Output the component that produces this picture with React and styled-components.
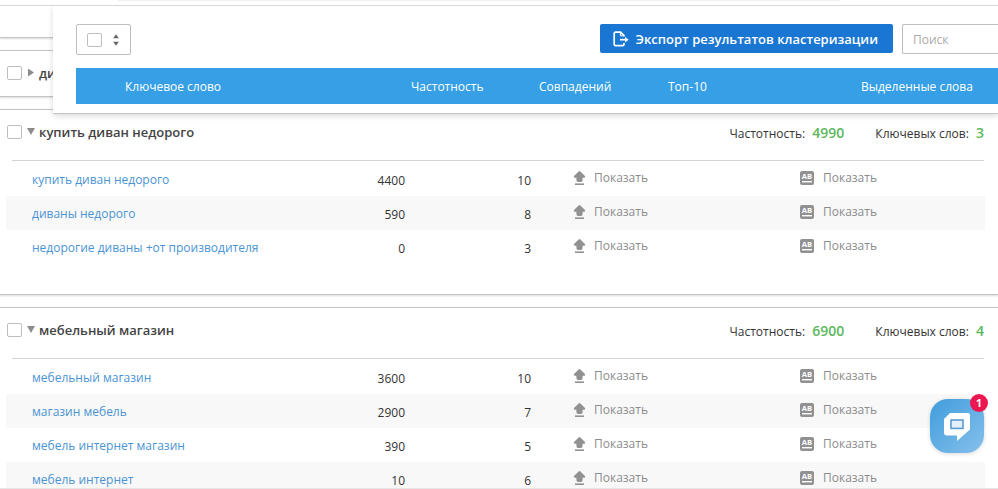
import React from 'react'
import styled, { createGlobalStyle } from 'styled-components'

const clusters = [
  {
    title: 'купить диван недорого',
    frequency: 4990,
    rows: [
      { keyword: 'купить диван недорого', frequency: 4400, matches: 10 },
      { keyword: 'диваны недорого', frequency: 590, matches: 8 },
      { keyword: 'недорогие диваны +от производителя', frequency: 0, matches: 3 },
    ],
  },
  {
    title: 'мебельный магазин',
    frequency: 6900,
    rows: [
      { keyword: 'мебельный магазин', frequency: 3600, matches: 10 },
      { keyword: 'магазин мебель', frequency: 2900, matches: 7 },
      { keyword: 'мебель интернет магазин', frequency: 390, matches: 5 },
      { keyword: 'мебель интернет', frequency: 10, matches: 6 },
    ],
  },
]

const ExportIcon = () => (
  <svg width="16" height="16" viewBox="0 0 16 16" fill="none" stroke="#fff" strokeWidth="1.7">
    <path d="M11 5.4V4.6L7.6 1.2H2.6Q1.2 1.2 1.2 2.6V13.2Q1.2 14.6 2.6 14.6H9.6Q11 14.6 11 13.2V12" />
    <path d="M7.4 1.2V4.8H11" strokeWidth="1" />
    <path d="M7 8.7H13" />
    <path d="M12 5.8L15.6 8.7L12 11.6Z" fill="#fff" stroke="none" />
  </svg>
)

const UploadIcon = () => (
  <svg width="13" height="16" viewBox="0 -1 13 16" fill="#919191">
    <path d="M6.5 0Q7 0 7.4 0.4L12 4.9Q12.6 6.5 11.4 6.7H9.6V9Q9.6 10.6 8.2 11H4.8Q3.4 10.6 3.4 9V6.7H1.6Q0.4 6.5 1 4.9L5.6 0.4Q6 0 6.5 0Z" />
    <rect x="2" y="12.4" width="9" height="1.6" />
  </svg>
)

const WordsIcon = () => (
  <svg width="14" height="14" viewBox="0 0 14 14">
    <rect width="14" height="14" rx="2" fill="#919191" />
    <text x="7" y="8.2" textAnchor="middle" fontSize="7.6" fontWeight="700" fill="#fff">AB</text>
    <rect x="2" y="10" width="10" height="1.4" fill="#fff" />
  </svg>
)

const ChatIcon = () => (
  <svg width="28" height="30" viewBox="0 0 28 30">
    <path d="M7 1H24.6Q27 1 27 3.4V17.5L14 29V23.5H3.4Q1 23.5 1 21.1V7Z" fill="#fff" />
    <rect x="8" y="8" width="12" height="8.4" fill="#e3f0fa" stroke="#5a9bd4" strokeWidth="1.6" />
  </svg>
)

const SortIcon = () => (
  <svg width="6" height="12" viewBox="0 0 6 12" fill="#666">
    <path d="M0.2 4.2L3 0.2L5.8 4.2Z" />
    <path d="M0.2 7.8L3 11.8L5.8 7.8Z" />
  </svg>
)

const Cluster = ({ title, frequency, rows }) => (
  <Panel>
    <Head>
      <Checkbox aria-label={title} />
      <Toggle $open aria-label="Свернуть" />
      <Title>{title}</Title>
      <Stats>
        <span>Частотность: <Value>{frequency}</Value></span>
        <span>Ключевых слов: <Value>{rows.length}</Value></span>
      </Stats>
    </Head>
    <Divider />
    <Table>
      <colgroup>
        <col />
        <Col $width={100} />
        <Col $width={168} />
        <Col $width={227} />
        <Col $width={185} />
      </colgroup>
      <tbody>
        {rows.map((row) => (
          <Row key={row.keyword}>
            <KeywordCell><Keyword href="#">{row.keyword}</Keyword></KeywordCell>
            <NumberCell>{row.frequency}</NumberCell>
            <NumberCell $gap={42}>{row.matches}</NumberCell>
            <Cell><Show><UploadIcon />Показать</Show></Cell>
            <Cell><Show $wide><WordsIcon />Показать</Show></Cell>
          </Row>
        ))}
      </tbody>
    </Table>
  </Panel>
)

const App = () => {
  return (
    <Page>
      <GlobalStyle />
      <TopBar><TopShade /></TopBar>
      <Blank />
      <Panel $collapsed>
        <Head>
          <Checkbox aria-label="диваны" />
          <Toggle aria-label="Развернуть" />
          <Title>диваны</Title>
        </Head>
      </Panel>
      {clusters.map((cluster) => (
        <Cluster key={cluster.title} {...cluster} />
      ))}

      <Sticky>
        <Toolbar>
          <SelectAll>
            <Checkbox aria-label="Выбрать все" />
            <SortButton aria-label="Варианты выбора"><SortIcon /></SortButton>
          </SelectAll>
          <ExportButton><ExportIcon />Экспорт результатов кластеризации</ExportButton>
          <Search placeholder="Поиск" aria-label="Поиск" />
        </Toolbar>
        <HeaderTable>
          <colgroup>
            <col />
            <Col $width={128} />
            <Col $width={129} />
            <Col $width={193} />
            <Col $width={137} />
          </colgroup>
          <thead>
            <tr>
              <HeaderCell $first>Ключевое слово</HeaderCell>
              <HeaderCell>Частотность</HeaderCell>
              <HeaderCell>Совпадений</HeaderCell>
              <HeaderCell>Топ-10</HeaderCell>
              <HeaderCell>Выделенные слова</HeaderCell>
            </tr>
          </thead>
        </HeaderTable>
      </Sticky>

      <ChatButton aria-label="Открыть чат">
        <ChatIcon />
        <Badge>1</Badge>
      </ChatButton>
    </Page>
  )
}

export default App

const GlobalStyle = createGlobalStyle`
* {
  box-sizing: border-box;
}
body {
  margin: 0;
  background: #fff;
  color: #333;
  font-family: "Open Sans", "Noto Sans", sans-serif;
  font-size: 12px;
  line-height: 20px;
}
button, input {
  font: inherit;
}
`

const Page = styled.div`
position: relative;
height: 100vh;
overflow: hidden;
border-bottom: 1px solid #e6e6e6;
`

const TopBar = styled.div`
height: 6px;
border-bottom: 1px solid #d9d9d9;
`

const TopShade = styled.div`
height: 1px;
margin: 0 158px 0 118px;
background: #f0f0f0;
`

const Blank = styled.div`
height: 32px;
margin-bottom: 12px;
border-bottom: 1px solid #c4c4c4;
box-shadow: 0 1px 2px rgba(0, 0, 0, 0.15);
`

const Panel = styled.section`
margin-bottom: 12px;
padding-bottom: ${(p) => (p.$collapsed ? '0' : '30px')};
border-top: 1px solid #c4c4c4;
border-bottom: 1px solid #c4c4c4;
box-shadow: 0 1px 2px rgba(0, 0, 0, 0.15);
`

const Head = styled.div`
height: 45px;
display: flex;
align-items: center;
padding: 0 14px 2px 7px;
`

const Checkbox = styled.input.attrs({ type: 'checkbox' })`
appearance: none;
width: 15px;
height: 14px;
margin: 0;
border: 1px solid #bdbdbd;
border-radius: 2px;
background: #fff;
`

const Toggle = styled.button`
width: 17px;
height: 16px;
padding: 0 0 0 ${(p) => (p.$open ? '5px' : '6px')};
border: 0;
background: none;

&::before {
  content: "";
  display: block;
  width: ${(p) => (p.$open ? '8px' : '6px')};
  height: ${(p) => (p.$open ? '7px' : '8px')};
  background: #8c8c8c;
  clip-path: ${(p) => (p.$open ? 'polygon(0 0, 100% 0, 50% 100%)' : 'polygon(0 0, 100% 50%, 0 100%)')};
}
`

const Title = styled.h2`
margin: 0;
flex: 1;
font-size: 13px;
font-weight: 600;
color: #444;
`

const Stats = styled.div`
display: flex;
gap: 31px;
padding-top: 4px;
`

const Value = styled.b`
margin-left: 4px;
font-size: 14px;
font-weight: 600;
color: #5cb85c;
`

const Divider = styled.hr`
height: 1px;
margin: 5px 14px 1px 12px;
border: 0;
background: #d4d4d4;
`

const Table = styled.table`
width: calc(100% - 19px);
margin: 0 13px 0 6px;
table-layout: fixed;
border-collapse: collapse;
`

const Col = styled.col`
width: ${(p) => p.$width}px;
`

const Row = styled.tr`
height: 34px;

&:nth-child(even) {
  background: #f8f8f8;
}
`

const Cell = styled.td`
padding: 0;
white-space: nowrap;
`

const KeywordCell = styled(Cell)`
padding: 2px 0 0 26px;
`

const NumberCell = styled(Cell)`
padding: 3px ${(p) => p.$gap || 0}px 0 0;
text-align: right;
`

const Keyword = styled.a`
color: #4a94d4;
text-decoration: none;
`

const Show = styled.button`
display: flex;
align-items: center;
gap: ${(p) => (p.$wide ? '9px' : '8px')};
padding: 0 0 3px;
border: 0;
background: none;
color: #8c8c8c;
`

const Sticky = styled.header`
position: absolute;
top: 6px;
left: 53px;
right: 0;
padding: 18px 0 9px 23px;
background: #fff;
border-bottom: 1px solid #c4c4c4;
box-shadow: 0 2px 6px rgba(0, 0, 0, 0.15);
clip-path: inset(0 0 -10px -10px);
`

const Toolbar = styled.div`
display: flex;
align-items: flex-start;
margin-bottom: 13px;
`

const SelectAll = styled.div`
width: 55px;
height: 31px;
display: flex;
align-items: center;
justify-content: space-between;
padding: 0 10px;
margin-right: auto;
border: 1px solid #bdbdbd;
border-radius: 2px;
`

const SortButton = styled.button`
display: flex;
padding: 0 1px;
border: 0;
background: none;
`

const ExportButton = styled.button`
height: 29px;
display: flex;
align-items: center;
gap: 7px;
padding: 0 15px 0 13px;
border: 0;
border-radius: 2px;
background: #1976d2;
color: #fff;
font-size: 13px;
font-weight: 600;
white-space: nowrap;
`

const Search = styled.input`
width: 96px;
height: 30px;
margin-left: 9px;
padding: 0 10px;
border: 1px solid #bdbdbd;
border-right: 0;
border-radius: 2px 0 0 2px;
outline: none;

&::placeholder {
  color: #aaa;
}
`

const HeaderTable = styled.table`
width: 100%;
table-layout: fixed;
border-collapse: collapse;
background: #369fe5;
`

const HeaderCell = styled.th`
height: 36px;
padding: 2px 0 0 ${(p) => (p.$first ? '49px' : '0')};
color: #fff;
font-weight: 400;
text-align: left;
white-space: nowrap;
`

const ChatButton = styled.button`
position: fixed;
right: 14px;
bottom: 36px;
width: 54px;
height: 54px;
display: flex;
align-items: center;
justify-content: center;
padding: 2px 0 0;
border: 0;
border-radius: 18px;
background: linear-gradient(135deg, #3f9ddb, #86c0ec);
box-shadow: 0 1px 4px rgba(0, 0, 0, 0.15);
`

const Badge = styled.span`
position: absolute;
top: -5px;
right: -4px;
width: 18px;
height: 18px;
border-radius: 9px;
background: #ec1651;
color: #fff;
font-size: 11px;
font-weight: 700;
line-height: 18px;
`
